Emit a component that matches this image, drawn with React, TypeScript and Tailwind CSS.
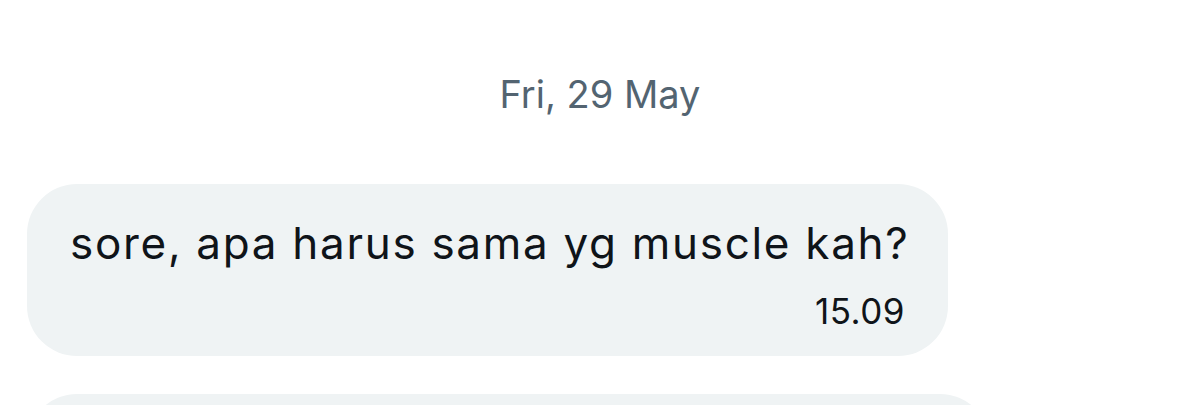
export default function App() {
  return (
    <div className="w-[1200px] h-[405px] overflow-hidden bg-white font-['Inter','Liberation_Sans',sans-serif]">
      <div className="flex justify-center pt-[68px]">
        <span className="text-[38px] leading-[52px] text-[#536471]">Fri, 29 May</span>
      </div>
      <div className="flex flex-col gap-[38px] pl-[27px] pt-[64px]">
        <div className="w-[921px] h-[172px] rounded-[50px] bg-[#eff3f4] px-[43px] pt-[31px] flex flex-col">
          <span className="whitespace-nowrap text-[44px] leading-[56px] tracking-[1.7px] text-[#0f1419]">sore, apa harus sama yg muscle kah?</span>
          <span className="self-end text-[35px] leading-[40px] tracking-[0.5px] text-[#0f1419] mt-[20px]">15.09</span>
        </div>
        <div className="w-[963px] h-[120px] rounded-[50px] bg-[#eff3f4]" />
      </div>
    </div>
  )
}
